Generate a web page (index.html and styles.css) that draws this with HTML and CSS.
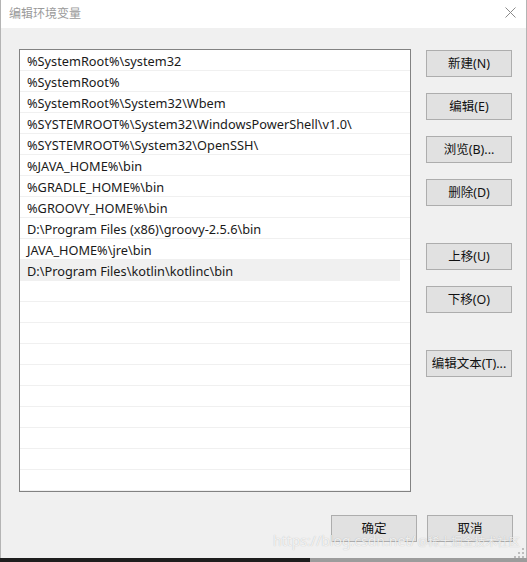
FILE: index.html
```html
<!DOCTYPE html>
<html lang="zh-CN">
  <head>
    <meta charset="UTF-8">
    <title>编辑环境变量</title>
    <link rel="stylesheet" href="styles.css">
  </head>
  <body>
    <div class="window">
      <div class="titlebar">
        <span class="title">编辑环境变量</span>
        <svg class="close" width="11" height="11" viewBox="0 0 11 11">
          <path d="M0.5 0.5L10.5 10.5M10.5 0.5L0.5 10.5" stroke="#8a8a8a" stroke-width="1" fill="none"/>
        </svg>
      </div>

      <div class="dialog">
        <div class="main">
          <ul class="path-list">
            <li>%SystemRoot%\system32</li>
            <li>%SystemRoot%</li>
            <li>%SystemRoot%\System32\Wbem</li>
            <li>%SYSTEMROOT%\System32\WindowsPowerShell\v1.0\</li>
            <li>%SYSTEMROOT%\System32\OpenSSH\</li>
            <li>%JAVA_HOME%\bin</li>
            <li>%GRADLE_HOME%\bin</li>
            <li>%GROOVY_HOME%\bin</li>
            <li>D:\Program Files (x86)\groovy-2.5.6\bin</li>
            <li>JAVA_HOME%\jre\bin</li>
            <li class="selected">D:\Program Files\kotlin\kotlinc\bin</li>
            <li></li>
            <li></li>
            <li></li>
            <li></li>
            <li></li>
            <li></li>
            <li></li>
            <li></li>
            <li></li>
            <li></li>
          </ul>

          <div class="side-buttons">
            <button class="btn">新建(N)</button>
            <button class="btn">编辑(E)</button>
            <button class="btn">浏览(B)...</button>
            <button class="btn">删除(D)</button>
            <button class="btn group-start">上移(U)</button>
            <button class="btn">下移(O)</button>
            <button class="btn group-start">编辑文本(T)...</button>
          </div>
        </div>

        <div class="footer">
          <button class="btn">确定</button>
          <button class="btn">取消</button>
          <svg class="grip" width="10" height="10" viewBox="0 0 10 10">
            <rect x="8" y="0" width="2" height="2" fill="#bdbdbd"/>
            <rect x="4" y="4" width="2" height="2" fill="#bdbdbd"/>
            <rect x="8" y="4" width="2" height="2" fill="#bdbdbd"/>
            <rect x="0" y="8" width="2" height="2" fill="#bdbdbd"/>
            <rect x="4" y="8" width="2" height="2" fill="#bdbdbd"/>
            <rect x="8" y="8" width="2" height="2" fill="#bdbdbd"/>
          </svg>
        </div>
      </div>

      <div class="watermark">https://blog.csdn.net/<span class="wm-site">@稀土掘金技术社区</span></div>
    </div>

    <div class="taskbar">
      <span class="taskbar-dark"></span>
      <span class="taskbar-light"></span>
    </div>
  </body>
</html>
```

FILE: styles.css
```css
body {
    margin: 0;
    background: #ffffff;
    font-family: "Noto Sans", "Noto Sans CJK SC", sans-serif;
    font-size: 12px;
    color: #1a1a1a;
}
.window {
    position: relative;
    width: 525px;
    height: 558px;
    border-left: 1px solid #b4b4b4;
    border-right: 1px solid #b4b4b4;
    background: #f0f0f0;
    display: flex;
    flex-direction: column;
}
.titlebar {
    height: 28px;
    background: #ffffff;
    display: flex;
    align-items: center;
    justify-content: space-between;
    padding: 0 10px 0 8px;
}
.title {
    color: #9a9a9a;
    font-size: 12px;
    margin-top: -3px;
}
.close {
    margin-top: -3px;
}
.dialog {
    flex: 1;
    display: flex;
    flex-direction: column;
}
.main {
    display: flex;
    padding: 21px 0 0 18px;
}
.path-list {
    list-style: none;
    margin: 0;
    padding: 0;
    width: 390px;
    height: 441px;
    overflow: hidden;
    background: #ffffff;
    border: 1px solid #828282;
}
.path-list li {
    height: 18px;
    line-height: 18px;
    padding: 2px 0 0 7px;
    font-size: 12.75px;
    border-bottom: 1px solid #f0f0f0;
    white-space: nowrap;
}
.path-list li.selected {
    background: #f0f0f0;
    margin-right: 10px;
}
.side-buttons {
    display: flex;
    flex-direction: column;
    margin-left: 15px;
    padding-top: 1px;
}
.btn {
    width: 86px;
    height: 27px;
    padding: 0 0 2px;
    background: #e1e1e1;
    border: 1px solid #adadad;
    font-family: "Noto Sans", "Noto Sans CJK SC", sans-serif;
    font-size: 12.5px;
    color: #111111;
}
.side-buttons .btn + .btn {
    margin-top: 16px;
}
.side-buttons .btn.group-start {
    margin-top: 37px;
}
.footer {
    position: relative;
    display: flex;
    justify-content: flex-end;
    gap: 10px;
    padding: 23px 13px 0 0;
}
.grip {
    position: absolute;
    right: 2px;
    top: 56px;
}
.watermark {
    position: absolute;
    left: 272px;
    top: 533px;
    font-size: 14px;
    line-height: 16px;
    color: rgba(255, 255, 255, 0.8);
    text-shadow: 0 0 1px rgba(0, 0, 0, 0.25);
    white-space: nowrap;
}
.wm-site {
    font-size: 11.5px;
    margin-left: 2px;
}
.taskbar {
    display: flex;
    height: 4px;
}
.taskbar-dark {
    width: 310px;
    background: #1e1e1e;
}
.taskbar-light {
    flex: 1;
    background: #9c9c9c;
}
```
